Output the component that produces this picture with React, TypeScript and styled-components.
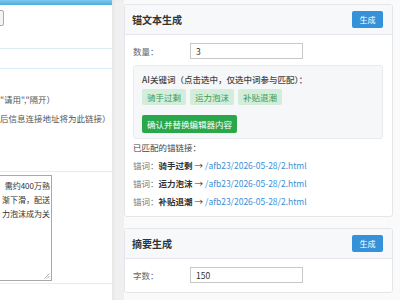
import styled, { createGlobalStyle } from "styled-components";

const GlobalStyle = createGlobalStyle`
  html, body {
    margin: 0;
    padding: 0;
    width: 400px;
    height: 300px;
    overflow: hidden;
    background: #fafafa;
    font-family: "Noto Sans CJK SC", "Noto Sans", sans-serif;
  }
  * {
    box-sizing: border-box;
  }
`

const Page = styled.div`
  display: flex;
  width: 400px;
  height: 300px;
`

const LeftPanel = styled.div`
  width: 112px;
  flex-shrink: 0;
  background: #fff;
  overflow: hidden;
  font-size: 8.5px;
  color: #555;
`

const TopBar = styled.div`
  height: 5px;
  background: linear-gradient(#7ccaee, #4fabdc);
`

const Section = styled.div<{ $height: number }>`
  height: ${(p) => p.$height}px;
  border-bottom: 1px solid #dceef7;
  overflow: hidden;
`

const CutBox = styled.div`
  margin: 5px 0 0 -16px;
  width: 20px;
  height: 16px;
  border: 1px solid #aaa;
  border-radius: 2px;
  background: #f4f4f4;
`

const HintLine = styled.div<{ $first?: boolean }>`
  margin-top: ${(p) => (p.$first ? 24 : 7)}px;
  line-height: 12px;
  white-space: nowrap;
`

const FakeTextarea = styled.div`
  margin: 3px 0 0 -50px;
  width: 102px;
  height: 106px;
  border: 1px solid #a9a9a9;
  background: #fff;
  padding: 3px 1px 0 0;
  position: relative;
  color: #333;
  font-size: 8px;
`

const TextLine = styled.div`
  text-align: right;
  white-space: nowrap;
  line-height: 14px;
`

const Grip = styled.svg`
  position: absolute;
  right: 1px;
  bottom: 1px;
`

const Gutter = styled.div`
  width: 12px;
  flex-shrink: 0;
  background: #f0f0f0;
  box-shadow: inset 2px 0 3px rgba(0, 0, 0, 0.04);
`

const RightCol = styled.div`
  flex: 1;
  padding: 4px 7px 0 0;
  display: flex;
  flex-direction: column;
  gap: 11px;
`

const Card = styled.div`
  background: #fff;
  border: 1px solid #e3e6ea;
  border-radius: 3px;
`

const CardHeader = styled.div`
  height: 30px;
  background: #f6f8fa;
  border-bottom: 1px solid #e3e6ea;
  display: flex;
  align-items: center;
  justify-content: space-between;
  padding: 0 9px 0 7px;
`

const CardTitle = styled.div`
  font-size: 10px;
  font-weight: 700;
  color: #333;
`

const BlueButton = styled.button`
  width: 31px;
  height: 17px;
  border: none;
  border-radius: 2px;
  background: #3592d8;
  color: #fff;
  font-family: inherit;
  font-size: 8px;
  padding: 0;
`

const CardBody = styled.div`
  padding: 8px 9px 9px 8px;
  font-size: 8.5px;
  color: #555;
`

const FieldRow = styled.div`
  display: flex;
  align-items: center;
`

const FieldLabel = styled.div`
  width: 57px;
  color: #666;
`

const Input = styled.input`
  width: 113px;
  height: 16px;
  border: 1px solid #c8c8c8;
  padding: 0 5px;
  font-family: inherit;
  font-size: 8.5px;
  color: #333;
  background: #fff;
`

const AiBox = styled.div`
  margin-top: 6px;
  background: #f5f7f9;
  border: 1px solid #e9ecef;
  border-radius: 3px;
  padding: 7px 9px 5px 8px;
`

const AiLabel = styled.div`
  line-height: 12px;
  font-weight: 500;
  color: #444;
`

const Tags = styled.div`
  display: flex;
  gap: 4px;
  margin-top: 4px;
`

const Tag = styled.span`
  height: 16px;
  line-height: 16px;
  padding: 0 5px;
  background: #d4edda;
  color: #3c9a55;
  border-radius: 2px;
`

const ConfirmButton = styled.button`
  margin-top: 10px;
  height: 18px;
  padding: 0 5px;
  border: none;
  border-radius: 2px;
  background: #2aa74a;
  color: #fff;
  font-family: inherit;
  font-size: 8.5px;
`

const MatchTitle = styled.div`
  margin-top: 2px;
  line-height: 12px;
  color: #444;
`

const MatchRow = styled.div`
  margin-top: 6px;
  line-height: 12px;
  color: #777;
  white-space: nowrap;
`

const Anchor = styled.b`
  color: #333;
  font-weight: 700;
`

const Arrow = styled.span`
  color: #333;
  margin: 0 2px;
`

const UrlLink = styled.a`
  color: #3c8fd6;
  text-decoration: none;
`

const keywords = ["骑手过剩", "运力泡沫", "补贴退潮"];

export default function App() {
  return (
    <Page>
      <GlobalStyle />
      <LeftPanel>
        <TopBar />
        <Section $height={44}>
          <CutBox />
        </Section>
        <Section $height={20} />
        <Section $height={103}>
          <HintLine $first>"请用","隔开）</HintLine>
          <HintLine>后信息连接地址将为此链接）</HintLine>
        </Section>
        <Section $height={112}>
          <FakeTextarea>
            <TextLine>需约400万熟</TextLine>
            <TextLine>渐下滑，配送</TextLine>
            <TextLine>力泡沫成为关</TextLine>
            <Grip width="6" height="6" viewBox="0 0 6 6">
              <path d="M5.5 0.5 L0.5 5.5 M5.5 3 L3 5.5" stroke="#999" strokeWidth="0.8" />
            </Grip>
          </FakeTextarea>
        </Section>
      </LeftPanel>
      <Gutter />
      <RightCol>
        <Card>
          <CardHeader>
            <CardTitle>锚文本生成</CardTitle>
            <BlueButton>生成</BlueButton>
          </CardHeader>
          <CardBody>
            <FieldRow>
              <FieldLabel>数量：</FieldLabel>
              <Input defaultValue="3" />
            </FieldRow>
            <AiBox>
              <AiLabel>AI关键词（点击选中，仅选中词参与匹配）：</AiLabel>
              <Tags>
                {keywords.map((k) => (
                  <Tag key={k}>{k}</Tag>
                ))}
              </Tags>
              <ConfirmButton>确认并替换编辑器内容</ConfirmButton>
            </AiBox>
            <MatchTitle>已匹配的锚链接：</MatchTitle>
            {keywords.map((k) => (
              <MatchRow key={k}>
                锚词：<Anchor>{k}</Anchor>
                <Arrow>→</Arrow>
                <UrlLink href="#">/afb23/2026-05-28/2.html</UrlLink>
              </MatchRow>
            ))}
          </CardBody>
        </Card>
        <Card>
          <CardHeader>
            <CardTitle>摘要生成</CardTitle>
            <BlueButton>生成</BlueButton>
          </CardHeader>
          <CardBody>
            <FieldRow>
              <FieldLabel>字数：</FieldLabel>
              <Input defaultValue="150" />
            </FieldRow>
          </CardBody>
        </Card>
      </RightCol>
    </Page>
  );
}
